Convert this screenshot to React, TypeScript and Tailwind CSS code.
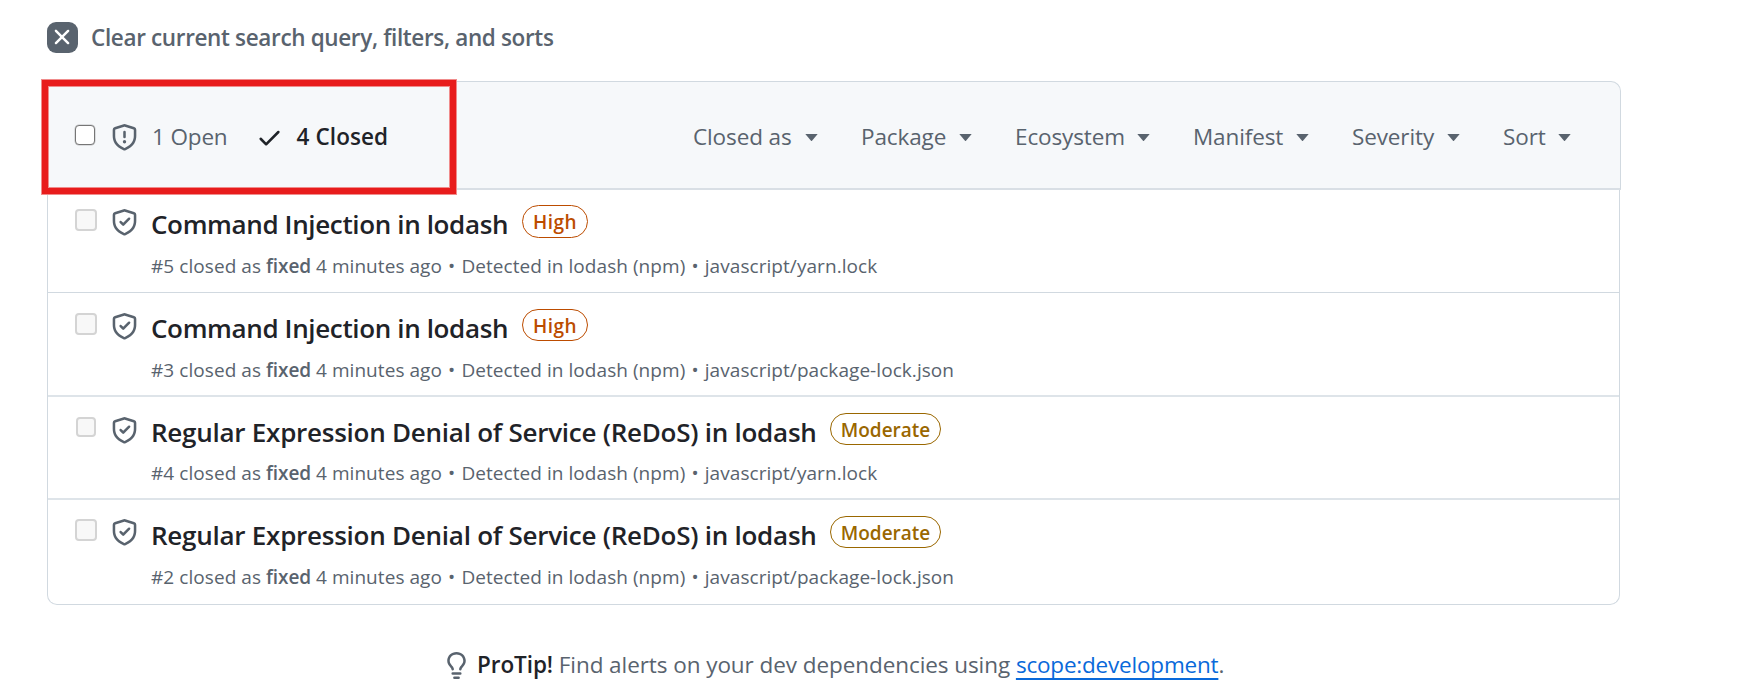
type Severity = "High" | "Moderate";

interface Alert {
  id: number;
  title: string;
  severity: Severity;
  file: string;
  row: string;
  icons: string;
  box: string;
  badge: string;
  meta: string;
}

const HIGH = "w-[66px] border-[#bc4c00] text-[#bc4c00] tracking-[0.5px]";
const MODERATE = "w-[111px] border-[#9a6700] text-[#9a6700]";

const alerts: Alert[] = [
  {
    id: 5,
    title: "Command Injection in lodash",
    severity: "High",
    file: "javascript/yarn.lock",
    row: "h-[103px] border-b border-[#d1d9e0] pt-[15px]",
    icons: "mt-1",
    box: "ml-0 size-[22px]",
    badge: "h-[33px]",
    meta: "mt-2.5",
  },
  {
    id: 3,
    title: "Command Injection in lodash",
    severity: "High",
    file: "javascript/package-lock.json",
    row: "h-[104px] border-b-2 border-[#dee4e9] pt-4",
    icons: "mt-1",
    box: "ml-0 size-[22px]",
    badge: "h-8",
    meta: "mt-2.5",
  },
  {
    id: 4,
    title: "Regular Expression Denial of Service (ReDoS) in lodash",
    severity: "Moderate",
    file: "javascript/yarn.lock",
    row: "h-[103px] border-b-2 border-[#dee4e9] pt-4",
    icons: "mt-1",
    box: "ml-px size-5",
    badge: "h-8",
    meta: "mt-[9px]",
  },
  {
    id: 2,
    title: "Regular Expression Denial of Service (ReDoS) in lodash",
    severity: "Moderate",
    file: "javascript/package-lock.json",
    row: "h-[104px] pt-4",
    icons: "mt-[3px]",
    box: "ml-0 size-[22px]",
    badge: "h-8",
    meta: "mt-2.5",
  },
];

const filters = ["Closed as", "Package", "Ecosystem", "Manifest", "Severity", "Sort"];

const SHIELD =
  "m8.533.133 5.25 1.68A1.75 1.75 0 0 1 15 3.48V7c0 1.566-.32 3.182-1.303 4.682-.983 1.498-2.585 2.813-5.032 3.855a1.697 1.697 0 0 1-1.33 0c-2.447-1.042-4.049-2.357-5.032-3.855C1.32 10.182 1 8.566 1 7V3.48a1.75 1.75 0 0 1 1.217-1.667l5.25-1.68a1.748 1.748 0 0 1 1.066 0Zm-.61 1.429.001.001-5.25 1.68a.251.251 0 0 0-.174.237V7c0 1.36.275 2.666 1.057 3.859.784 1.194 2.121 2.342 4.366 3.298a.196.196 0 0 0 .154 0c2.245-.957 3.582-2.103 4.366-3.297C13.225 9.666 13.5 8.358 13.5 7V3.48a.25.25 0 0 0-.174-.238l-5.25-1.68a.25.25 0 0 0-.153 0Z";
const SHIELD_CHECK =
  "M11.28 6.28l-3.5 3.5a.75.75 0 0 1-1.06 0l-1.5-1.5a.749.749 0 0 1 .326-1.275.749.749 0 0 1 .734.215l.97.97 2.97-2.97a.751.751 0 0 1 1.042.018.751.751 0 0 1 .018 1.042Z";
const SHIELD_ALERT =
  "M8.75 4.75v3a.75.75 0 0 1-1.5 0v-3a.75.75 0 0 1 1.5 0ZM9 10.5a1 1 0 1 1-2 0 1 1 0 0 1 2 0Z";
const CHECK =
  "M13.78 4.22a.75.75 0 0 1 0 1.06l-7.25 7.25a.75.75 0 0 1-1.06 0L2.22 9.28a.751.751 0 0 1 .018-1.042.751.751 0 0 1 1.042-.018L6 10.94l6.72-6.72a.75.75 0 0 1 1.06 0Z";
const CROSS =
  "M3.72 3.72a.75.75 0 0 1 1.06 0L8 6.94l3.22-3.22a.749.749 0 0 1 1.275.326.749.749 0 0 1-.215.734L9.06 8l3.22 3.22a.749.749 0 0 1-.326 1.275.749.749 0 0 1-.734-.215L8 9.06l-3.22 3.22a.751.751 0 0 1-1.042-.018.751.751 0 0 1-.018-1.042L6.94 8 3.72 4.78a.75.75 0 0 1 0-1.06Z";
const BULB =
  "M8 1.5c-2.363 0-4 1.69-4 3.75 0 .984.424 1.625.984 2.304l.214.253c.223.264.47.556.673.848.284.411.537.896.621 1.49a.75.75 0 0 1-1.484.211c-.04-.282-.163-.547-.37-.847a8.456 8.456 0 0 0-.542-.68c-.084-.1-.173-.205-.268-.32C3.201 7.75 2.5 6.766 2.5 5.25 2.5 2.31 4.863 0 8 0s5.5 2.31 5.5 5.25c0 1.516-.701 2.5-1.328 3.259-.095.115-.184.22-.268.319-.207.245-.383.453-.541.681-.208.3-.33.565-.37.847a.751.751 0 0 1-1.485-.212c.084-.593.337-1.078.621-1.489.203-.292.45-.584.673-.848.075-.088.147-.173.213-.253.561-.679.985-1.32.985-2.304 0-2.06-1.637-3.75-4-3.75ZM5.75 12h4.5a.75.75 0 0 1 0 1.5h-4.5a.75.75 0 0 1 0-1.5ZM6 15.25a.75.75 0 0 1 .75-.75h2.5a.75.75 0 0 1 0 1.5h-2.5a.75.75 0 0 1-.75-.75Z";

function Icon({ paths, className }: { paths: string[]; className: string }) {
  return (
    <svg viewBox="0 0 16 16" fill="currentColor" className={className} aria-hidden="true">
      {paths.map((d) => (
        <path key={d} d={d} />
      ))}
    </svg>
  );
}

function Header() {
  return (
    <div className="relative flex h-[109px] w-[1574px] items-center rounded-t-[10px] border border-b-2 border-[#d1d9e0] border-b-[#d9dfe5] bg-[#f6f8fa] pt-[3px] pl-[27px]">
      <span className="-mt-[3px] size-5 shrink-0 rounded-[4px] border-[1.5px] border-[#767676] bg-white ring-[0.5px] ring-[#76767666]" />
      <Icon paths={[SHIELD, SHIELD_ALERT]} className="mt-px ml-4 size-[27px] shrink-0 text-[#59636e]" />
      <span className="ml-3.5 w-[77px] tracking-[-0.15px] whitespace-nowrap">1 Open</span>
      <Icon paths={[CHECK]} className="mt-px ml-[27px] size-[27px] shrink-0 text-[#1f2328]" />
      <span className="ml-[13.5px] font-semibold tracking-[0.1px] whitespace-nowrap text-[#1f2328]">4 Closed</span>
      <nav className="mr-[49px] ml-auto grid grid-cols-[168px_154px_178px_159px_151px_68px] tracking-[-0.12px]">
        {filters.map((name, i) => (
          <span
            key={name}
            className={
              i === filters.length - 1
                ? "flex items-center justify-between"
                : "flex items-center justify-between pr-[43px]"
            }
          >
            <span className="whitespace-nowrap">{name}</span>
            <svg viewBox="0 0 13 7" className="mt-px h-[7px] w-[13px]" fill="#59636e" aria-hidden="true">
              <path d="M0.3 0h12.4L7 6.7a.7.7 0 0 1-1 0z" />
            </svg>
          </span>
        ))}
      </nav>
      <div className="absolute -top-[2px] -left-[6px] h-[114px] w-[414px] border-[6px] border-[#e81c1c] shadow-[0_0_0_1px_#f08c8c,inset_0_0_0_1px_#f08c8c]" />
    </div>
  );
}

function AlertRow({ alert }: { alert: Alert }) {
  return (
    <li className={`flex items-start pl-[27px] ${alert.row}`}>
      <div className={`flex w-[63px] shrink-0 items-start justify-between ${alert.icons}`}>
        <span className={`rounded-[4px] border-2 border-[#d4d4d4] bg-[#f8f8f8] ${alert.box}`} />
        <Icon paths={[SHIELD, SHIELD_CHECK]} className="size-[27px] shrink-0 text-[#59636e]" />
      </div>
      <div className="ml-[13px]">
        <div className="flex items-start">
          <h3
            className={`mt-px text-[26px] leading-9 font-semibold whitespace-nowrap text-[#1f2328] ${
              alert.severity === "High" ? "w-[371px] tracking-[-0.36px]" : "w-[679px] tracking-[-0.25px]"
            }`}
          >
            {alert.title}
          </h3>
          <span
            className={`flex items-center justify-center rounded-full border pt-px text-[19px] font-semibold ${
              alert.badge
            } ${alert.severity === "High" ? HIGH : MODERATE}`}
          >
            {alert.severity}
          </span>
        </div>
        <p className={`text-[19px] leading-7 tracking-[0.06px] whitespace-nowrap ${alert.meta}`}>
          #{alert.id} closed as <strong className="font-semibold tracking-[-0.1px]">fixed</strong> 4 minutes ago{" "}
          <span className="mx-[1.1px]">•</span> Detected in lodash (npm) <span className="mx-[1.1px]">•</span>{" "}
          {alert.file}
        </p>
      </div>
    </li>
  );
}

export default function App() {
  return (
    <main className="h-[684px] overflow-hidden bg-white pt-[21px] pl-[47px] font-['Open_Sans','Noto_Sans',sans-serif] text-[22.5px] leading-8 text-[#59636e]">
      <div className="flex h-8 items-center">
        <span className="flex size-[31px] shrink-0 items-center justify-center rounded-[9px] bg-[#59636e] text-white">
          <Icon paths={[CROSS]} className="mr-px size-[26px]" />
        </span>
        <span className="ml-[13px] pt-px font-semibold tracking-[-0.35px] whitespace-nowrap">
          Clear current search query, filters, and sorts
        </span>
      </div>
      <section className="mt-7">
        <Header />
        <ul className="h-[415px] w-[1573px] rounded-b-[10px] border border-t-0 border-[#d1d9e0]">
          {alerts.map((alert) => (
            <AlertRow key={alert.id} alert={alert} />
          ))}
        </ul>
      </section>
      <p className="mt-11 flex items-start pl-[396px] whitespace-nowrap">
        <Icon paths={[BULB]} className="mt-[3px] size-[27px] shrink-0" />
        <span className="ml-[7px] tracking-[-0.07px]">
          <strong className="font-semibold text-[#1f2328]">ProTip!</strong> Find alerts on your dev dependencies using{" "}
          <a className="tracking-[-0.2px] text-[#0969da] underline decoration-2 underline-offset-[5px]">scope:development</a>.
        </span>
      </p>
    </main>
  );
}
